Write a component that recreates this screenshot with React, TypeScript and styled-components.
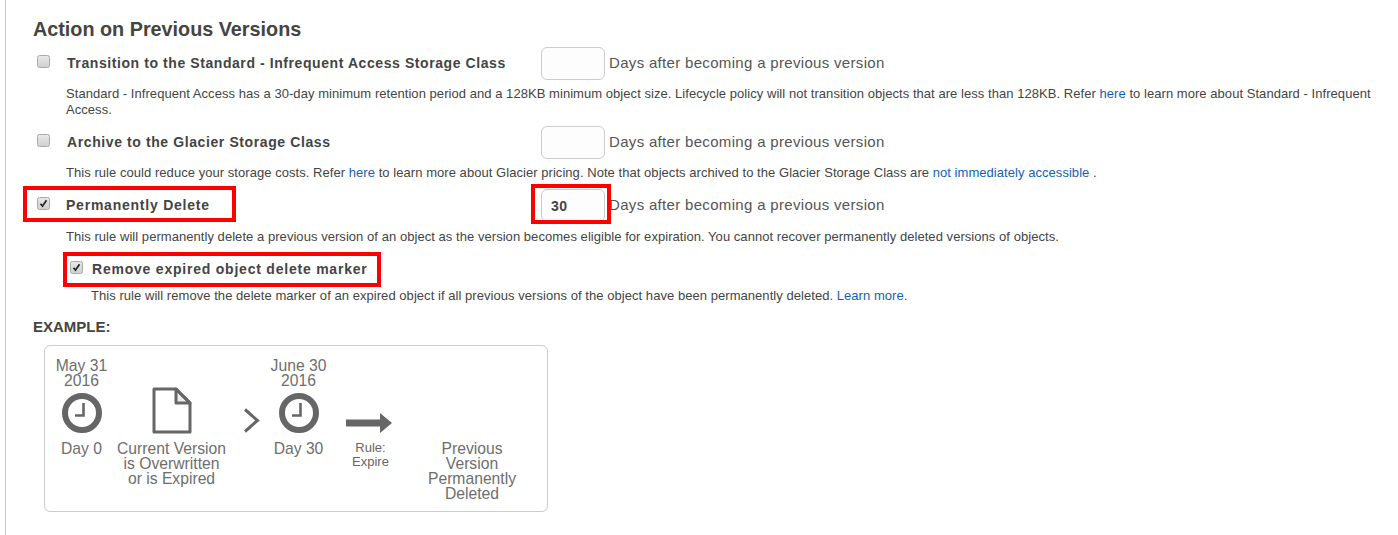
import React from "react";
import styled, { createGlobalStyle } from "styled-components";

const Global = createGlobalStyle`
  html, body { margin: 0; padding: 0; background: #fff; }
  body { font-family: "Liberation Sans", Arial, sans-serif; color: #444; overflow: hidden; }
`;

const Page = styled.div`
  width: 1393px;
  height: 535px;
  box-sizing: border-box;
  margin-left: 5px;
  border-left: 1px solid #ccc;
  padding: 18px 0 0 27px;
  overflow: hidden;
`;

const Title = styled.h2`
  margin: 0 0 7px;
  font-size: 19.8px;
  line-height: 22px;
  font-weight: bold;
  color: #444;
`;

const Row = styled.div`
  display: grid;
  grid-template-columns: 34px 474px 68px 1fr;
  align-items: center;
  height: 33px;
`;

const CheckCell = styled.div`
  padding-left: 4px;
  display: flex;
  align-items: center;
`;

const Box = styled.span`
  width: 11px;
  height: 11px;
  border: 1px solid #a9a9a9;
  border-radius: 2.5px;
  background: linear-gradient(#e8e8e8, #d0d0d0);
  display: flex;
  align-items: center;
  justify-content: center;
  margin-top: -4px;
`;

const Label = styled.span<{ $track: number; $shift?: number }>`
  font-size: 14px;
  font-weight: bold;
  letter-spacing: ${(p) => p.$track}px;
  margin-left: ${(p) => p.$shift ?? 0}px;
  padding-bottom: 2px;
  color: #444;
  white-space: nowrap;
`;

const DaysInput = styled.div`
  width: 62px;
  height: 31px;
  box-sizing: content-box;
  border: 1px solid #ccc;
  border-radius: 6px;
  background: #fdfdfd;
  font-size: 14px;
  font-weight: bold;
  letter-spacing: 0.5px;
  color: #444;
  line-height: 32px;
  text-indent: 9px;
`;

const DaysText = styled.span`
  font-size: 15px;
  letter-spacing: 0.32px;
  padding-bottom: 2px;
  color: #555;
  white-space: nowrap;
`;

const Help = styled.p<{ $left: number; $top: number; $bottom: number }>`
  margin: ${(p) => p.$top}px 0 ${(p) => p.$bottom}px ${(p) => p.$left}px;
  font-size: 13px;
  letter-spacing: 0.05px;
  line-height: 16px;
  color: #444;
  width: 1312px;
`;

const A = styled.a`
  color: #0f62b8;
  text-decoration: none;
`;

const Mark = styled.span<{ $t: number; $r: number; $b: number; $l: number }>`
  position: relative;
  display: inline-flex;
  align-items: center;
  &::after {
    content: "";
    position: absolute;
    top: ${(p) => p.$t}px;
    right: ${(p) => p.$r}px;
    bottom: ${(p) => p.$b}px;
    left: ${(p) => p.$l}px;
    border: 4px solid #f00;
    pointer-events: none;
  }
`;

const SubRow = styled.div`
  display: flex;
  align-items: center;
  height: 33px;
  margin-left: 37px;
`;

const SubLabelGap = styled.span`
  width: 9px;
`;

const Example = styled.div`
  margin-top: 15px;
  font-size: 15px;
  line-height: 16px;
  font-weight: bold;
  color: #444;
`;

const Panel = styled.div`
  margin: 10px 0 0 11px;
  width: 504px;
  height: 167px;
  box-sizing: border-box;
  border: 1px solid #ccc;
  border-radius: 6px;
  display: flex;
  padding-top: 12px;
`;

const Col = styled.div<{ $w: number; $top?: number }>`
  width: ${(p) => p.$w}px;
  flex: none;
  display: flex;
  flex-direction: column;
  align-items: center;
  padding-top: ${(p) => p.$top ?? 0}px;
  text-align: center;
`;

const Cap = styled.div<{ $top?: number }>`
  font-size: 15.7px;
  line-height: 15px;
  color: #6e6e6e;
  white-space: nowrap;
  margin-top: ${(p) => p.$top ?? 0}px;
`;

const Small = styled.div`
  font-size: 13px;
  line-height: 14px;
  color: #666;
  margin-top: 8px;
  padding-left: 3px;
`;

const Icon = styled.svg<{ $top?: number }>`
  display: block;
  flex: none;
  margin-top: ${(p) => p.$top ?? 0}px;
`;

const Check = ({ on }: { on?: boolean }) => (
  <Box>
    {on && (
      <svg width="9" height="9" viewBox="0 0 9 9">
        <path d="M1.5 4.8 L3.5 7.2 L7.5 1.2" fill="none" stroke="#222" strokeWidth="1.7" />
      </svg>
    )}
  </Box>
);

const Clock = () => (
  <Icon $top={5} width="40" height="40" viewBox="0 0 40 40">
    <circle cx="20" cy="20" r="17" fill="none" stroke="#666" strokeWidth="6" />
    <path d="M21.5 10 V22.5 H13" fill="none" stroke="#666" strokeWidth="2.6" />
  </Icon>
);

const Doc = () => (
  <Icon width="40" height="47" viewBox="0 0 40 47">
    <path d="M2 2 H24 L38 16 V45 H2 Z" fill="none" stroke="#666" strokeWidth="3" strokeLinejoin="round" />
    <path d="M24 2 V16 H38 Z" fill="#666" fillOpacity="0.12" stroke="#666" strokeWidth="3" strokeLinejoin="round" />
  </Icon>
);

const Chevron = () => (
  <Icon width="17" height="25" viewBox="0 0 17 25">
    <path d="M2 1.5 L14.5 12.5 L2 23.5" fill="none" stroke="#666" strokeWidth="3" />
  </Icon>
);

const Arrow = () => (
  <Icon width="46" height="20" viewBox="0 0 46 20">
    <path d="M0 6.5 H34 V0 L46 10 L34 20 V13.5 H0 Z" fill="#666" />
  </Icon>
);

export default function App() {
  return (
    <Page>
      <Global />
      <Title>Action on Previous Versions</Title>
      <Row>
        <CheckCell><Check /></CheckCell>
        <Label $track={0.58}>Transition to the Standard - Infrequent Access Storage Class</Label>
        <DaysInput />
        <DaysText>Days after becoming a previous version</DaysText>
      </Row>
      <Help $left={33} $top={6} $bottom={8}>
        Standard - Infrequent Access has a 30-day minimum retention period and a 128KB minimum object size. Lifecycle policy will not transition objects that are less than 128KB. Refer <A href="#">here</A> to learn more about Standard - Infrequent Access.
      </Help>
      <Row>
        <CheckCell><Check /></CheckCell>
        <Label $track={0.6}>Archive to the Glacier Storage Class</Label>
        <DaysInput />
        <DaysText>Days after becoming a previous version</DaysText>
      </Row>
      <Help $left={33} $top={6} $bottom={8}>
        This rule could reduce your storage costs. Refer <A href="#">here</A> to learn more about Glacier pricing. Note that objects archived to the Glacier Storage Class are <A href="#">not immediately accessible</A> .
      </Help>
      <Row>
        <CheckCell>
          <Mark $t={-15} $r={-186} $b={-12} $l={-14}><Check on /></Mark>
        </CheckCell>
        <Label $track={0.77} $shift={-1}>Permanently Delete</Label>
        <Mark $t={-5} $r={-2} $b={-2} $l={-10}><DaysInput>30</DaysInput></Mark>
        <DaysText>Days after becoming a previous version</DaysText>
      </Row>
      <Help $left={33} $top={7} $bottom={8}>
        This rule will permanently delete a previous version of an object as the version becomes eligible for expiration. You cannot recover permanently deleted versions of objects.
      </Help>
      <SubRow>
        <Mark $t={-13.5} $r={-298} $b={-12.5} $l={-7}><Check on /></Mark>
        <SubLabelGap />
        <Label $track={0.78}>Remove expired object delete marker</Label>
      </SubRow>
      <Help $left={58} $top={2} $bottom={0}>
        This rule will remove the delete marker of an expired object if all previous versions of the object have been permanently deleted. <A href="#">Learn more.</A>
      </Help>
      <Example>EXAMPLE:</Example>
      <Panel>
        <Col $w={73}>
          <Cap>May 31<br />2016</Cap>
          <Clock />
          <Cap $top={8}>Day 0</Cap>
        </Col>
        <Col $w={107} $top={29}>
          <Doc />
          <Cap $top={7}>Current Version<br />is Overwritten<br />or is Expired</Cap>
        </Col>
        <Col $w={53} $top={50}><Chevron /></Col>
        <Col $w={41}>
          <Cap>June 30<br />2016</Cap>
          <Clock />
          <Cap $top={8}>Day 30</Cap>
        </Col>
        <Col $w={100} $top={55}>
          <Arrow />
          <Small>Rule:<br />Expire</Small>
        </Col>
        <Col $w={106} $top={83}>
          <Cap>Previous<br />Version<br />Permanently<br />Deleted</Cap>
        </Col>
      </Panel>
    </Page>
  );
}
